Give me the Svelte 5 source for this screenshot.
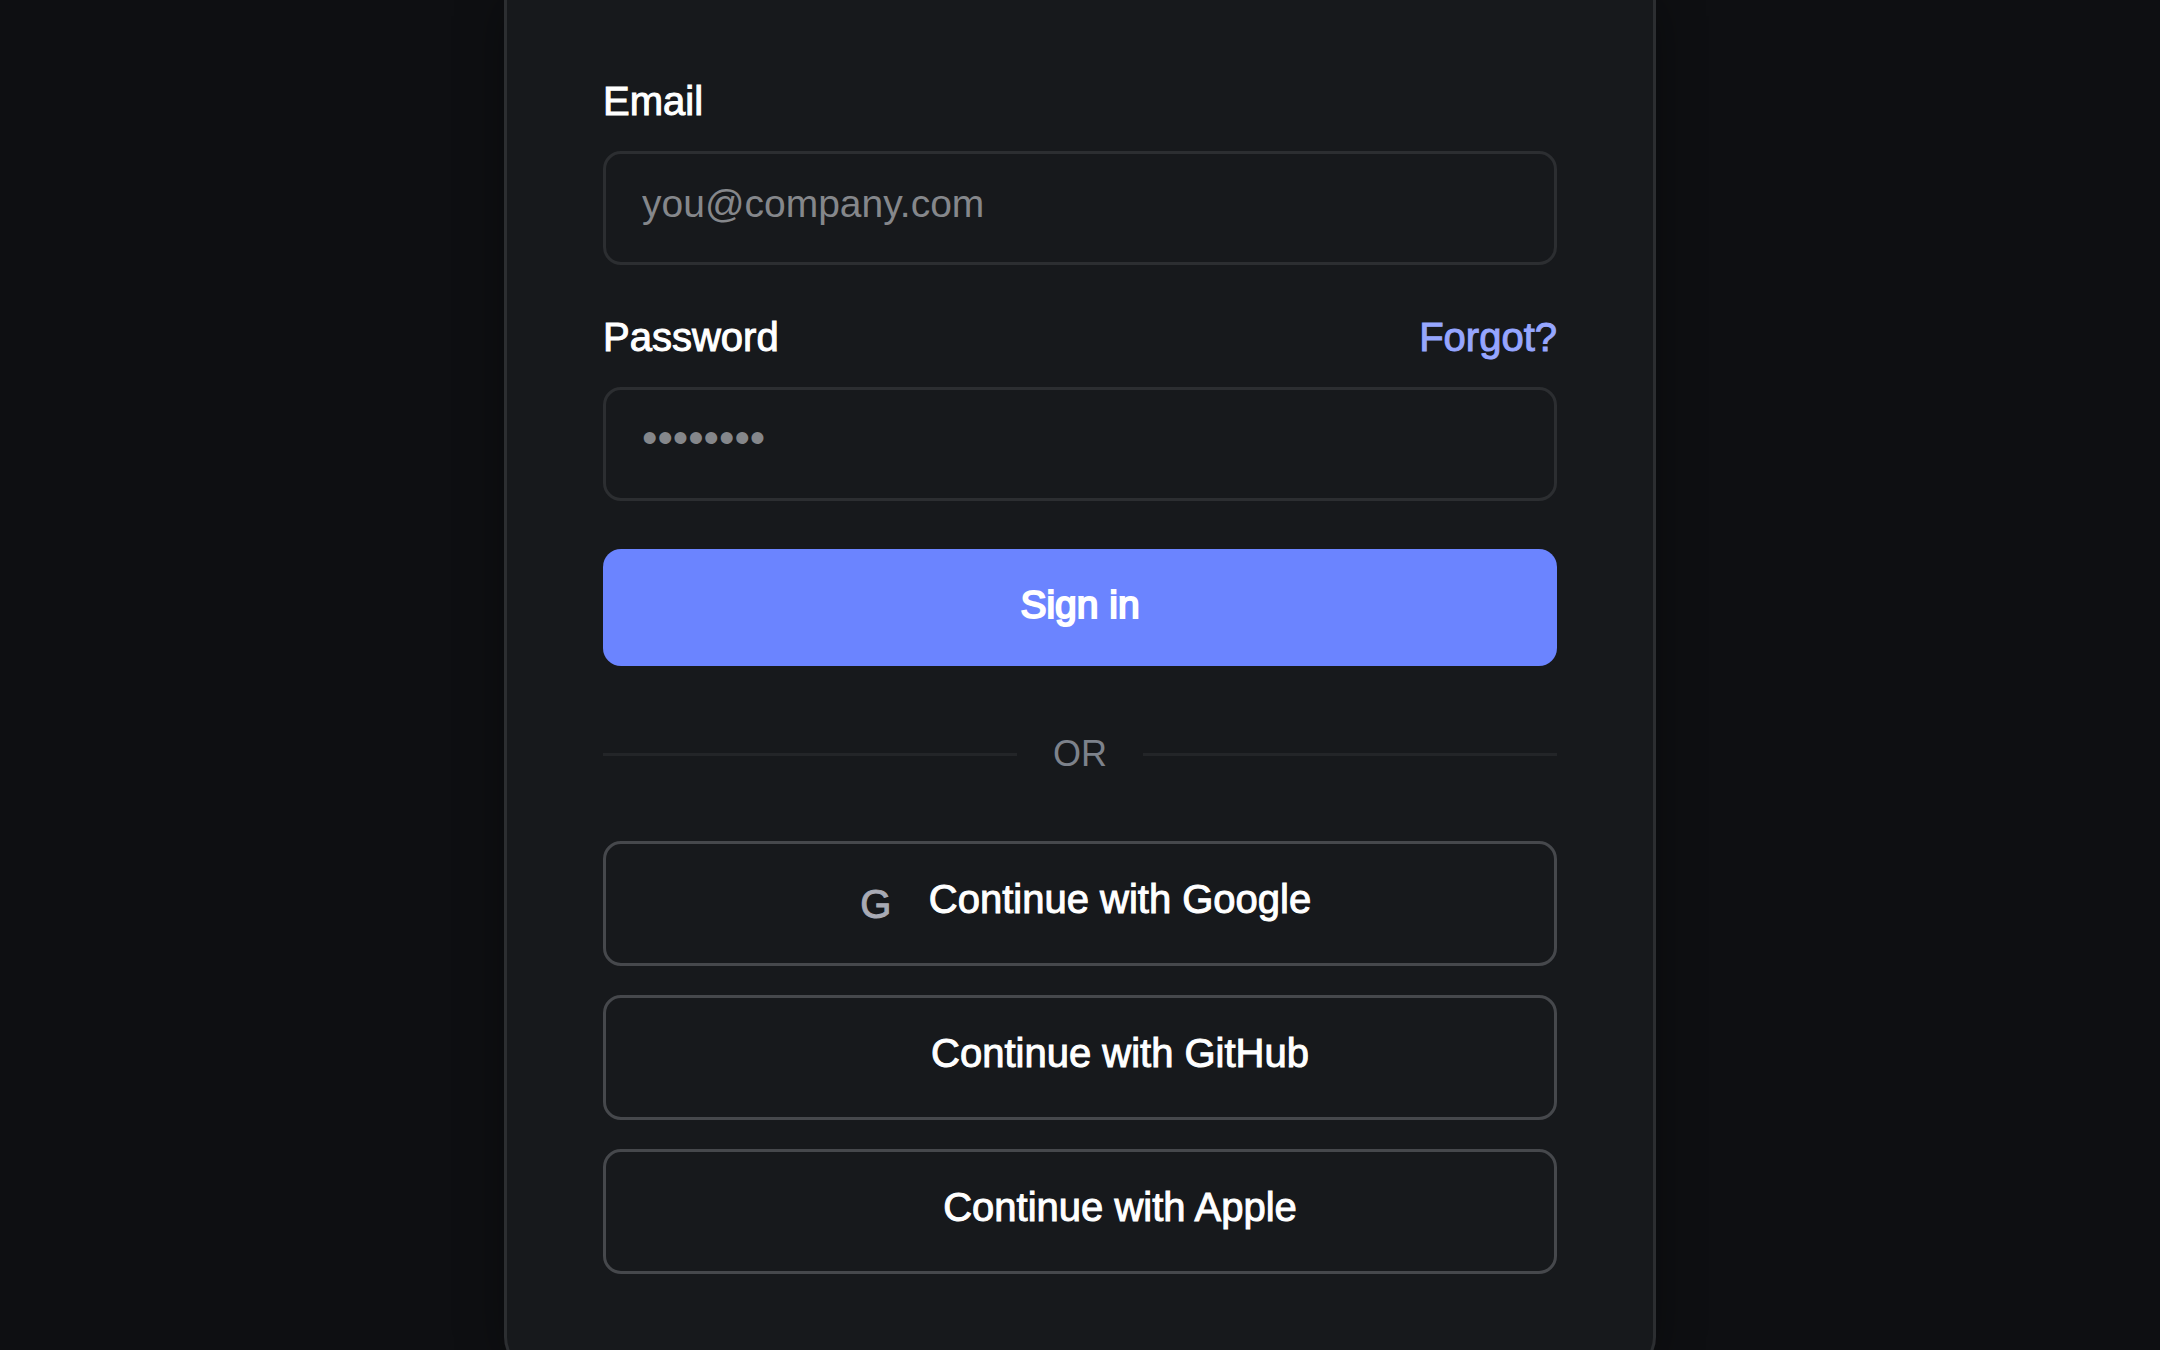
<script>
  const providers = [
    { id: 'google', name: 'Google', glyph: 'G' },
    { id: 'github', name: 'GitHub', glyph: '' },
    { id: 'apple', name: 'Apple', glyph: '' },
  ];

  let email = $state('');
  let password = $state('');

  function signIn(event) {
    event.preventDefault();
  }
</script>

<main class="page">
  <section class="card">
    <form onsubmit={signIn}>
      <div class="field">
        <label for="email">Email</label>
        <input id="email" type="email" placeholder="you@company.com" bind:value={email} />
      </div>

      <div class="field">
        <div class="field-head">
          <label for="password">Password</label>
          <a class="forgot" href="#forgot">Forgot?</a>
        </div>
        <input
          id="password"
          type="password"
          placeholder="••••••••"
          bind:value={password}
        />
      </div>

      <button class="submit" type="submit">Sign in</button>
    </form>

    <div class="divider"><span>OR</span></div>

    <div class="providers">
      {#each providers as p (p.id)}
        <button class="provider" type="button">
          <span class="glyph" aria-hidden="true">{p.glyph}</span>
          <span class="provider-label">Continue with {p.name}</span>
        </button>
      {/each}
    </div>
  </section>
</main>

<style>
  :global(body) {
    background: #0e0f12;
  }

  .page {
    display: flex;
    justify-content: center;
    align-items: flex-start;
    height: 100vh;
    overflow: hidden;
    font-family: 'Liberation Sans', Arial, sans-serif;
    font-size: 40px;
    line-height: 48px;
    color: #ffffff;
  }

  .card {
    box-sizing: border-box;
    width: 100%;
    max-width: 1152px;
    padding: 77px 96px 96px;
    background: #17191c;
    border: 3px solid #2c2e31;
    border-top: 0;
    border-radius: 0 0 36px 36px;
    box-shadow: 0 0 48px rgba(0, 0, 0, 0.35);
  }

  form {
    display: flex;
    flex-direction: column;
    gap: 48px;
  }

  .field {
    display: flex;
    flex-direction: column;
    gap: 26px;
  }
  .field-head {
    display: flex;
    justify-content: space-between;
  }

  label,
  .forgot,
  .provider-label {
    -webkit-text-stroke: 1px currentColor;
  }
  .forgot {
    color: #96a6ff;
    text-decoration: none;
  }

  input {
    box-sizing: border-box;
    width: 100%;
    height: 114px;
    padding: 0 36px 8px;
    font: inherit;
    font-size: 39px;
    color: #ffffff;
    background: transparent;
    border: 3px solid #2c2e31;
    border-radius: 18px;
    outline: none;
  }
  input::placeholder {
    color: #85878b;
    opacity: 1;
  }
  #password::placeholder {
    font-size: 44px;
  }
  input:focus {
    border-color: #6b84ff;
  }

  button {
    font: inherit;
    color: #ffffff;
    cursor: pointer;
  }

  .submit {
    height: 117px;
    padding: 0 36px 6px;
    background: #6b84ff;
    border: 0;
    border-radius: 18px;
    font-size: 39px;
    -webkit-text-stroke: 2px currentColor;
  }

  .divider {
    display: flex;
    align-items: center;
    gap: 36px;
    margin: 66px 0 65px;
    font-size: 36px;
    line-height: 44px;
    color: #7d828b;
  }
  .divider::before,
  .divider::after {
    content: '';
    flex: 1;
    height: 3px;
    background: #232528;
  }

  .providers {
    display: flex;
    flex-direction: column;
    gap: 29px;
  }
  .provider {
    display: flex;
    justify-content: center;
    align-items: center;
    gap: 26px;
    height: 125px;
    padding: 0 36px;
    background: transparent;
    border: 3px solid #46484c;
    border-radius: 18px;
  }
  .glyph {
    width: 54px;
    text-align: center;
    color: #a9abb5;
    -webkit-text-stroke: 1px currentColor;
  }
  .provider-label {
    padding-bottom: 10px;
  }
</style>
